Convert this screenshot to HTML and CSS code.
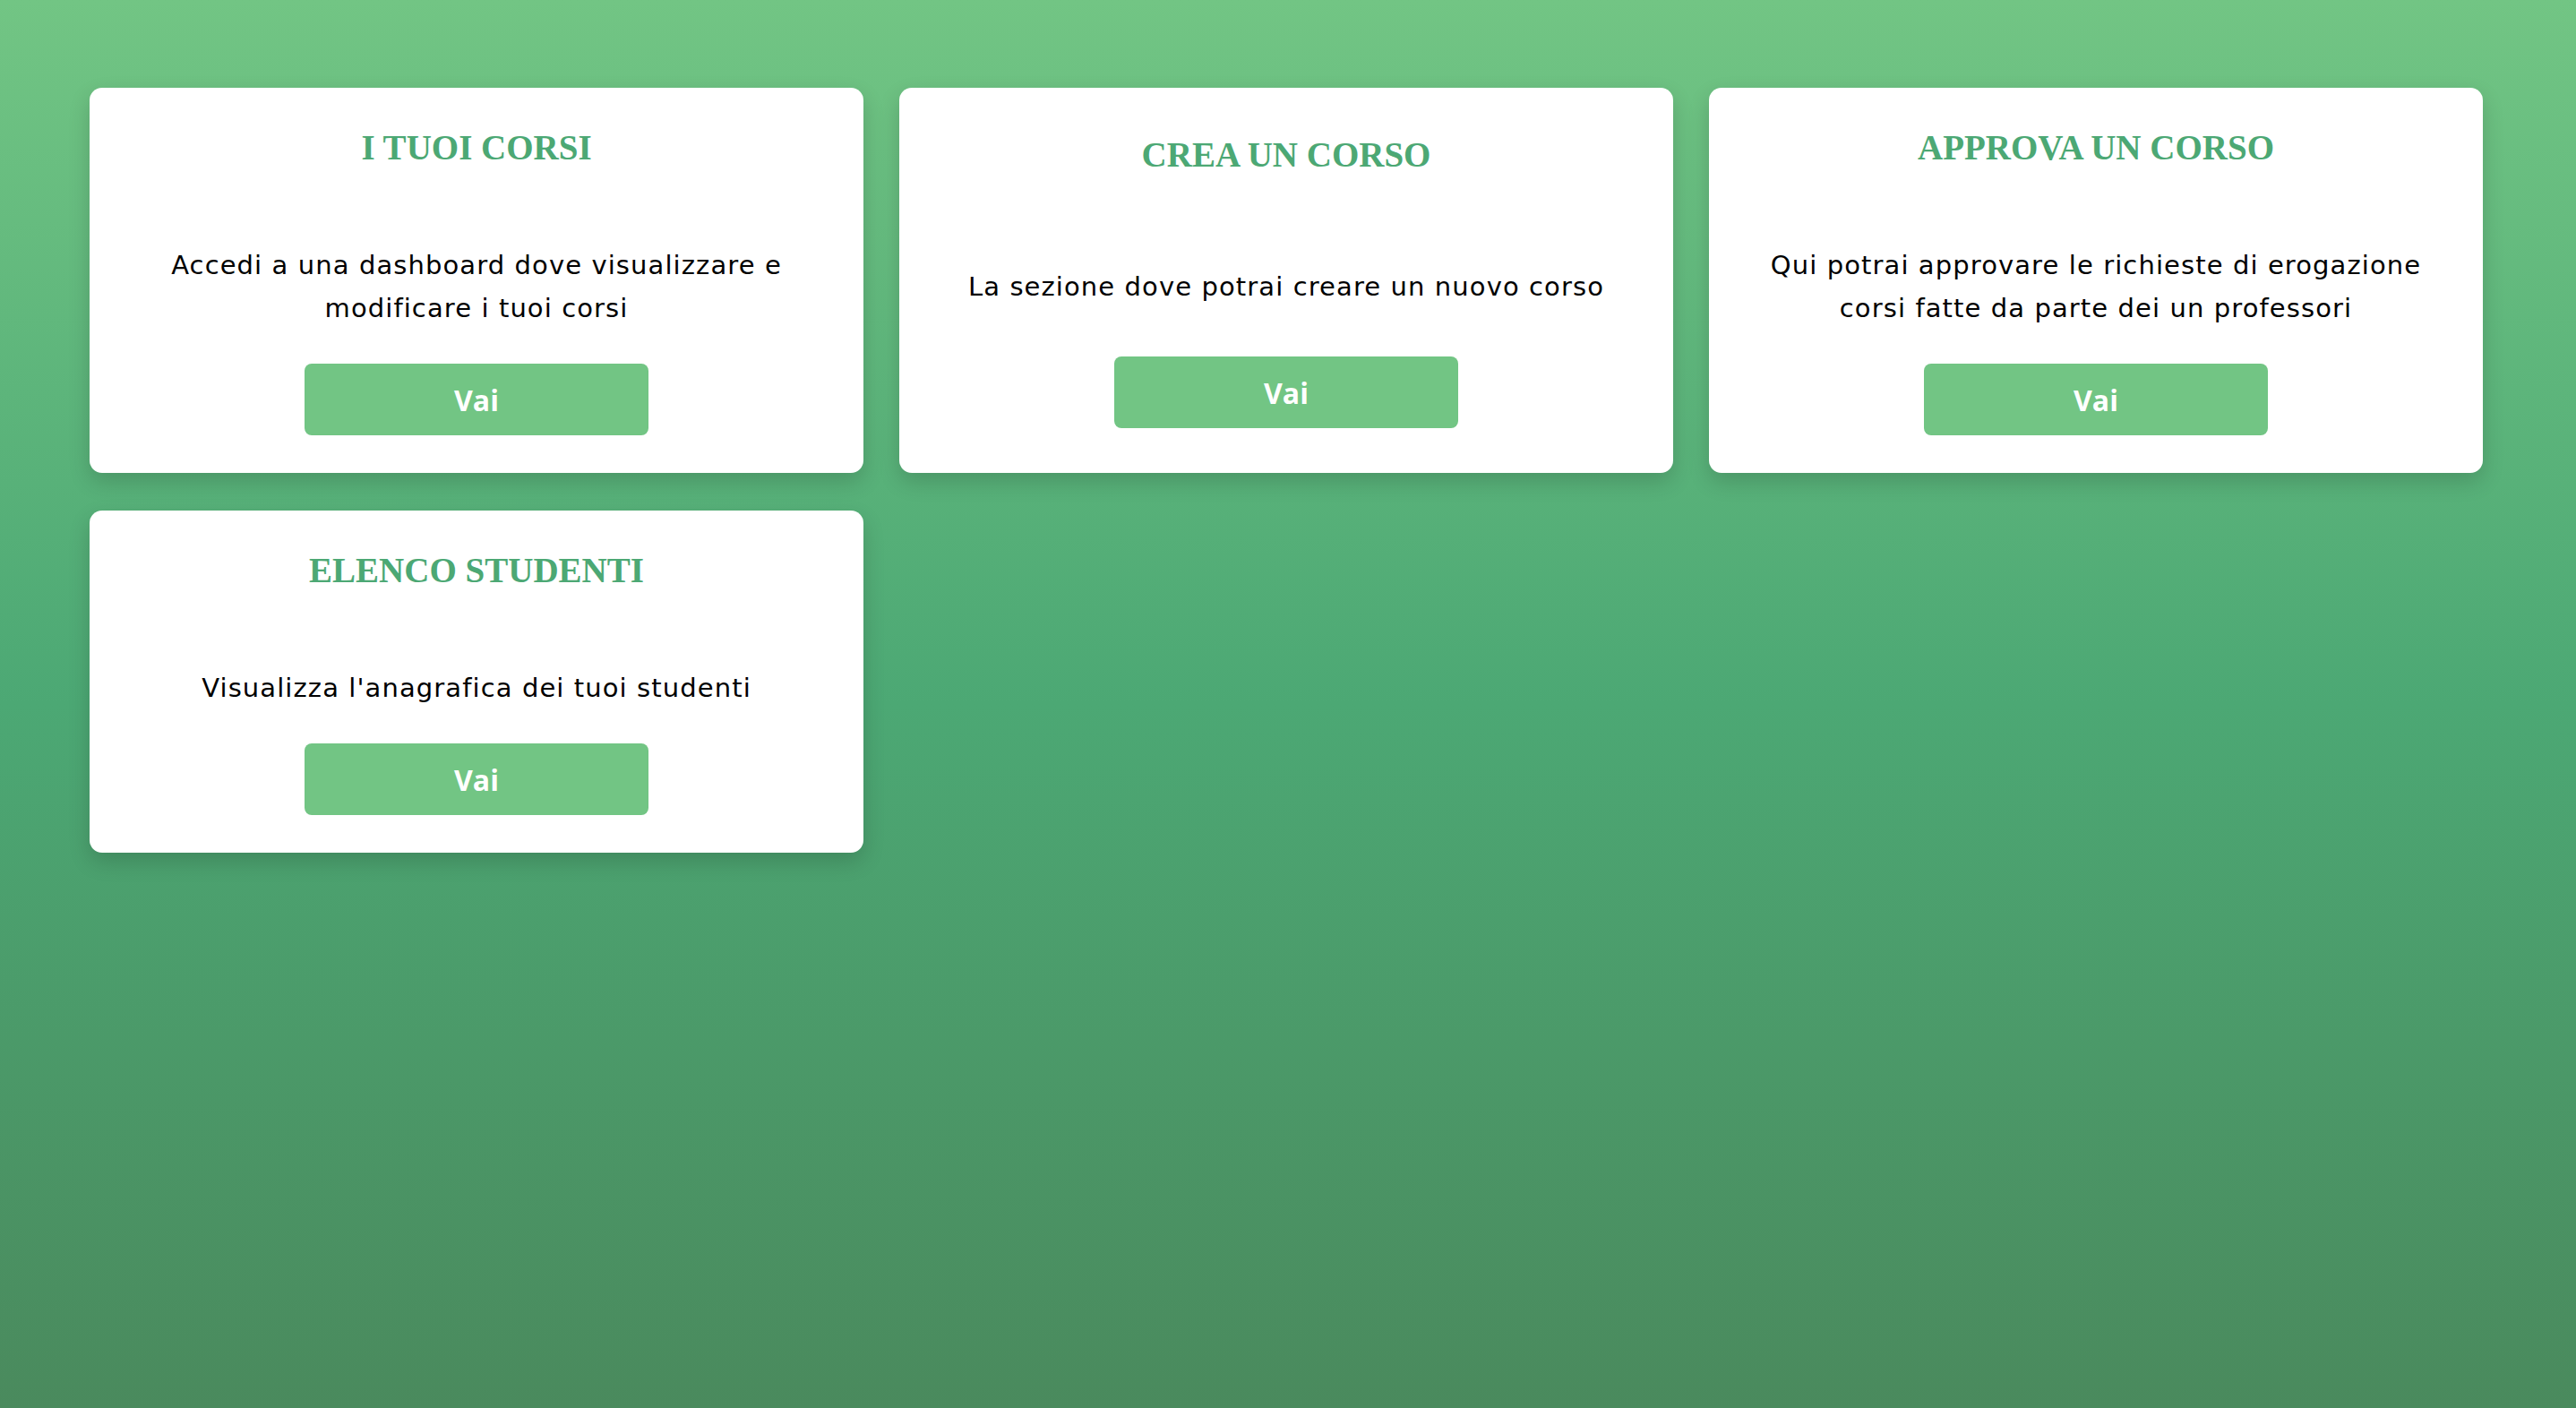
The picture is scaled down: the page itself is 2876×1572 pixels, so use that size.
FILE: index.html
```html
<!DOCTYPE html>
<html lang="it">
<head>
<meta charset="utf-8">
<title>Dashboard</title>
<link rel="stylesheet" href="styles.css">
</head>
<body>
<main class="grid">
  <section class="card">
    <h2 class="card-title">I TUOI CORSI</h2>
    <p class="card-text">Accedi a una dashboard dove visualizzare e modificare i tuoi corsi</p>
    <a class="btn" href="#">Vai</a>
  </section>
  <section class="card">
    <h2 class="card-title">CREA UN CORSO</h2>
    <p class="card-text">La sezione dove potrai creare un nuovo corso</p>
    <a class="btn" href="#">Vai</a>
  </section>
  <section class="card">
    <h2 class="card-title">APPROVA UN CORSO</h2>
    <p class="card-text">Qui potrai approvare le richieste di erogazione corsi fatte da parte dei un professori</p>
    <a class="btn" href="#">Vai</a>
  </section>
  <section class="card">
    <h2 class="card-title">ELENCO STUDENTI</h2>
    <p class="card-text">Visualizza l'anagrafica dei tuoi studenti</p>
    <a class="btn" href="#">Vai</a>
  </section>
</main>
</body>
</html>
```
FILE: styles.css
```css
html, body {
  margin: 0;
  padding: 0;
}
body {
  min-height: 100vh;
  background: linear-gradient(to bottom, #72c584 0%, #4ca874 50%, #4a8a5d 100%);
  font-family: "DejaVu Sans", "Open Sans", sans-serif;
}
.grid {
  display: grid;
  grid-template-columns: repeat(3, 864px);
  gap: 42px 40px;
  padding: 98px 100px;
  align-items: stretch;
}
.card {
  background: #fff;
  border-radius: 14px;
  box-shadow: 0 10px 24px rgba(0, 0, 0, 0.16);
  padding: 44px 40px 42px;
  display: flex;
  flex-direction: column;
  align-items: center;
  justify-content: space-around;
  text-align: center;
}
.card-title {
  margin: 0 0 84px;
  font-family: "Liberation Serif", "Times New Roman", serif;
  font-weight: 700;
  font-size: 39px;
  line-height: 46px;
  color: #4ca874;
}
.card-text {
  margin: 0 0 38px;
  font-size: 29px;
  line-height: 48px;
  color: #000;
  letter-spacing: 1.1px;
}
.btn {
  display: flex;
  align-items: center;
  justify-content: center;
  width: 384px;
  height: 80px;
  border-radius: 8px;
  background: #72c584;
  color: #fff;
  font-family: "Open Sans", sans-serif;
  font-weight: 700;
  font-size: 32px;
  text-decoration: none;
}
```
